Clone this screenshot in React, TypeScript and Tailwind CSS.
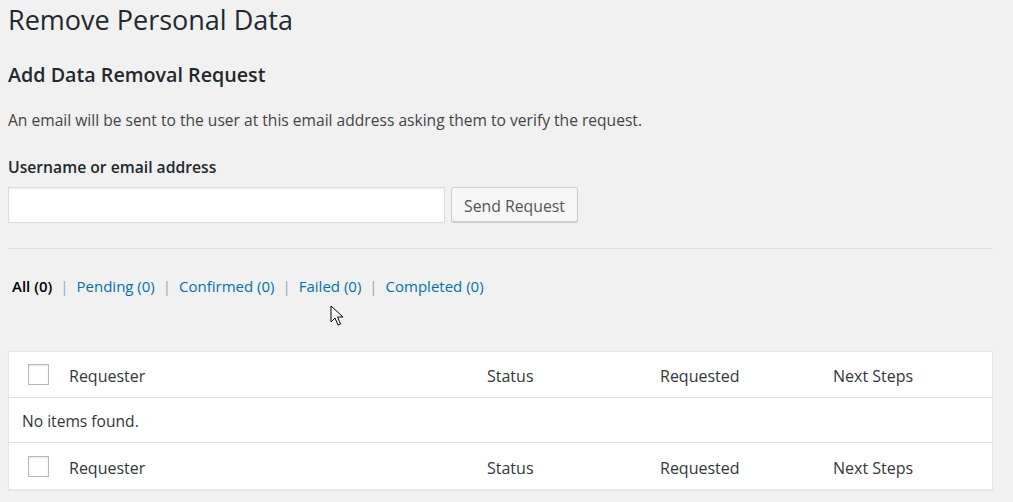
import React from "react";

const font = { fontFamily: '"Open Sans", "Noto Sans", sans-serif' };

function Checkbox() {
  return (
    <span className="block w-[21px] h-[21px] -mt-[3px] bg-white border border-[#b4b9be] shadow-[inset_0_1px_2px_rgba(0,0,0,0.1)] shrink-0" />
  );
}

function Row({ border }: { border?: string }) {
  return (
    <div className={`flex items-center h-[46px] pt-[3px] pl-[19px] text-[16px] text-[#32373c] ${border ?? ""}`}>
      <Checkbox />
      <div className="w-[418px] ml-[20px]">Requester</div>
      <div className="w-[173px]">Status</div>
      <div className="w-[173px]">Requested</div>
      <div>Next Steps</div>
    </div>
  );
}

export default function App() {
  const links = ["Pending (0)", "Confirmed (0)", "Failed (0)", "Completed (0)"];
  return (
    <div className="relative w-[1013px] h-[502px] bg-[#f1f1f1] overflow-hidden" style={font}>
      <div className="pl-[8px] pr-[20px]">
        <h1 className="text-[27px] leading-[36px] pt-[2px] text-[#23282d] font-normal">Remove Personal Data</h1>
        <h2 className="mt-[22px] text-[19.7px] leading-[30px] font-semibold text-[#23282d]">Add Data Removal Request</h2>
        <p className="mt-[20px] text-[15.6px] leading-[20px] text-[#444]">
          An email will be sent to the user at this email address asking them to verify the request.
        </p>
        <div className="mt-[26px] text-[15.7px] leading-[22px] font-semibold text-[#23282d]">Username or email address</div>
        <div className="mt-[9px] flex items-start gap-[6px]">
          <input
            className="w-[437px] h-[36px] bg-white border border-[#dddddd] shadow-[inset_0_1px_2px_rgba(0,0,0,0.07)] outline-none"
            style={font}
          />
          <button
            className="h-[35px] pt-[3px] px-[12px] bg-[#f7f7f7] border border-[#cccccc] rounded-[3px] shadow-[0_1px_0_#cccccc] text-[15.8px] leading-[20px] text-[#555]"
            style={font}
          >
            Send Request
          </button>
        </div>
        <div className="mt-[25px] h-0 border-t border-[#dddddd] w-[985px]" />
        <div className="mt-[26px] pl-[4px] flex items-center text-[15px] leading-[22px]">
          <span className="font-semibold text-[#000]">All (0)</span>
          {links.map((l) => (
            <React.Fragment key={l}>
              <span className="mx-[8px] text-[#a0a5aa]">|</span>
              <span className="text-[#0073aa]">{l}</span>
            </React.Fragment>
          ))}
        </div>
        <div className="mt-[54px] w-[985px] bg-white border border-[#e5e5e5] shadow-[0_1px_1px_rgba(0,0,0,0.04)]">
          <Row border="border-b border-[#e1e1e1]" />
          <div className="h-[45px] pt-[3px] flex items-center pl-[13px] text-[15.6px] text-[#32373c] border-b border-[#e1e1e1]">
            No items found.
          </div>
          <Row />
        </div>
      </div>
      <svg className="absolute left-[330px] top-[305px]" width="14" height="22" viewBox="0 0 14 22">
        <path d="M1 1 L1 17 L5 13 L8 20 L10.5 19 L7.5 12 L13 12 Z" fill="#fff" stroke="#000" strokeWidth="1" strokeLinejoin="round" />
      </svg>
    </div>
  );
}
